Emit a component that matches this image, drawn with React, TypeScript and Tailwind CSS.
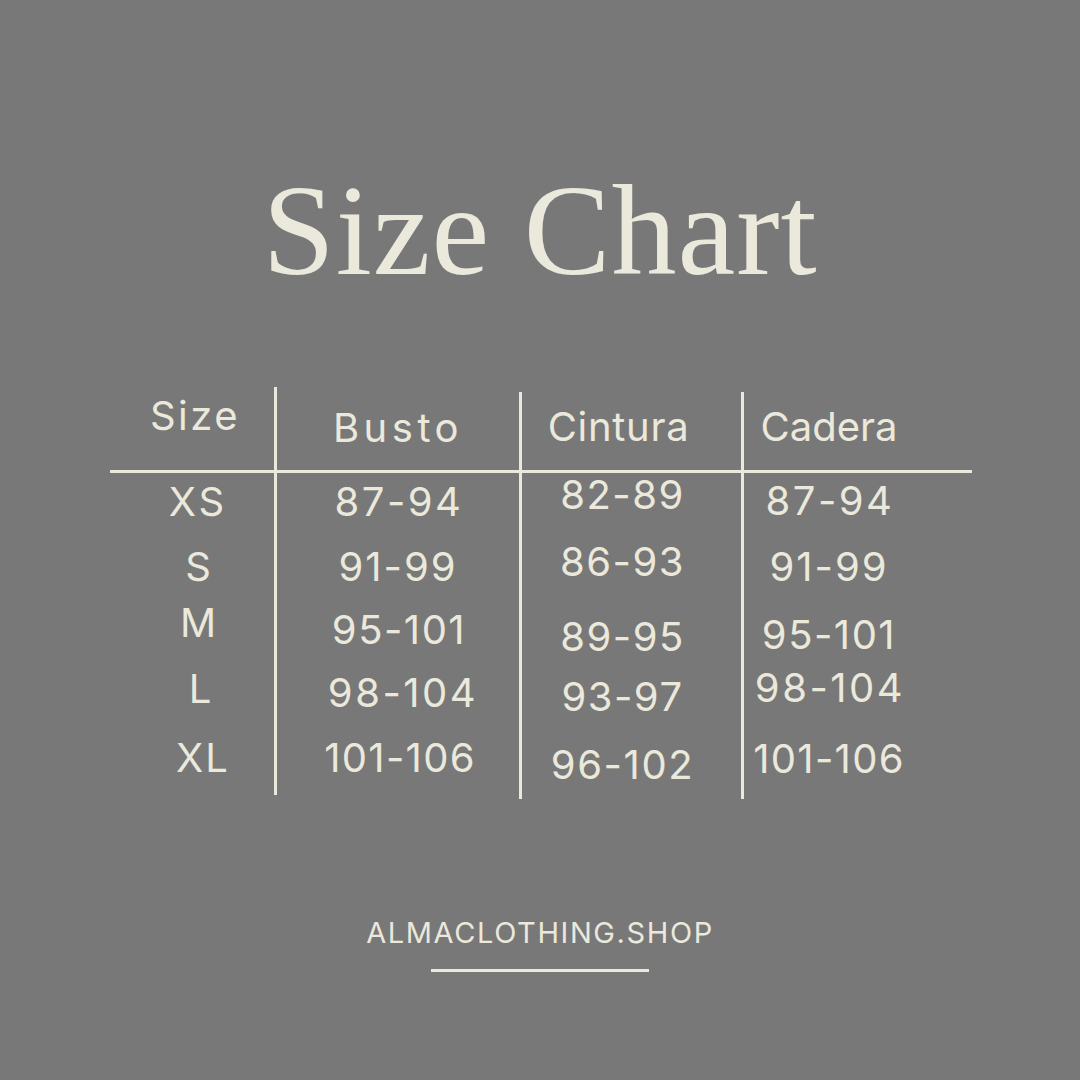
import React from "react";

type Item = { t: string; cls: string };

const col0: Item[] = [
  { t: "XS", cls: "mt-[9px] tracking-[3px]" },
  { t: "S", cls: "mt-[25px]" },
  { t: "M", cls: "mt-[16px]" },
  { t: "L", cls: "mt-[26px] pl-[4px]" },
  { t: "XL", cls: "mt-[29px] pl-[10px] tracking-[2px]" },
];
const col1: Item[] = [
  { t: "87-94", cls: "mt-[9px] tracking-[2.5px] pl-[2px]" },
  { t: "91-99", cls: "mt-[25px] tracking-[2px]" },
  { t: "95-101", cls: "mt-[23px] tracking-[1.5px] pl-[2px]" },
  { t: "98-104", cls: "mt-[23px] tracking-[2.5px] pl-[10px]" },
  { t: "101-106", cls: "mt-[25px] tracking-[1.3px] pl-[4px]" },
];
const col2: Item[] = [
  { t: "82-89", cls: "mt-[2px] tracking-[1.5px]" },
  { t: "86-93", cls: "mt-[27px] tracking-[1.5px]" },
  { t: "89-95", cls: "mt-[35px] tracking-[1.5px]" },
  { t: "93-97", cls: "mt-[20px] tracking-[1.5px]" },
  { t: "96-102", cls: "mt-[28px] tracking-[1.6px]" },
];
const col3: Item[] = [
  { t: "87-94", cls: "mt-[8px] tracking-[2.5px] pl-[2px]" },
  { t: "91-99", cls: "mt-[26px] tracking-[2px]" },
  { t: "95-101", cls: "mt-[28px] tracking-[1.5px]" },
  { t: "98-104", cls: "mt-[13px] tracking-[2.5px] pl-[2px]" },
  { t: "101-106", cls: "mt-[31px] tracking-[1.3px]" },
];

function Cell({ item }: { item: Item }) {
  return (
    <div className={"h-[40px] leading-[40px] text-[40px] whitespace-nowrap text-center " + item.cls}>
      {item.t}
    </div>
  );
}

function Column({
  header,
  headerCls,
  items,
  widthCls,
  padCls,
}: {
  header: string;
  headerCls: string;
  items: Item[];
  widthCls: string;
  padCls: string;
}) {
  return (
    <div className={"flex flex-col " + widthCls}>
      <div className={"h-[83px] flex flex-col " + padCls}>
        <div className={"h-[40px] leading-[40px] text-[40px] whitespace-nowrap text-center " + headerCls}>
          {header}
        </div>
      </div>
      <div className="h-[3px] bg-[#ebe8dc]" />
      <div className={"flex flex-col " + padCls}>
        {items.map((it, i) => (
          <Cell key={i} item={it} />
        ))}
      </div>
    </div>
  );
}

export default function App() {
  return (
    <div className="w-[1080px] h-[1080px] bg-[#787878] text-[#ebe8dc] flex flex-col items-center font-['Inter',sans-serif] font-normal">
      <h1 className="mt-[165px] h-[130px] text-[130px] leading-none tracking-[1px] font-['Liberation_Serif',serif] font-normal whitespace-nowrap">
        Size Chart
      </h1>

      <div className="mt-[92px] h-[413px] w-[862px] self-start ml-[110px] flex flex-row items-start">
        <Column header="Size" headerCls="mt-[9px] tracking-[2.5px] pr-[6px]" items={col0} widthCls="w-[164px]" padCls="pl-[12px]" />
        <div className="w-[3px] h-[408px] bg-[#ebe8dc]" />
        <Column header="Busto" headerCls="mt-[21px] tracking-[4.5px]" items={col1} widthCls="w-[242px]" padCls="" />
        <div className="w-[3px] h-[407px] mt-[5px] bg-[#ebe8dc]" />
        <Column header="Cintura" headerCls="mt-[20px] tracking-[0.7px] pr-[8px]" items={col2} widthCls="w-[219px]" padCls="pr-[18px]" />
        <div className="w-[3px] h-[407px] mt-[5px] bg-[#ebe8dc]" />
        <Column header="Cadera" headerCls="mt-[20px]" items={col3} widthCls="w-[228px]" padCls="pr-[58px]" />
      </div>

      <div className="mt-[118px] h-[29px] text-[29px] leading-[29px] tracking-[1.6px] whitespace-nowrap">ALMACLOTHING.SHOP</div>
      <div className="mt-[22px] w-[218px] h-[3px] bg-[#ebe8dc]" />
    </div>
  );
}
